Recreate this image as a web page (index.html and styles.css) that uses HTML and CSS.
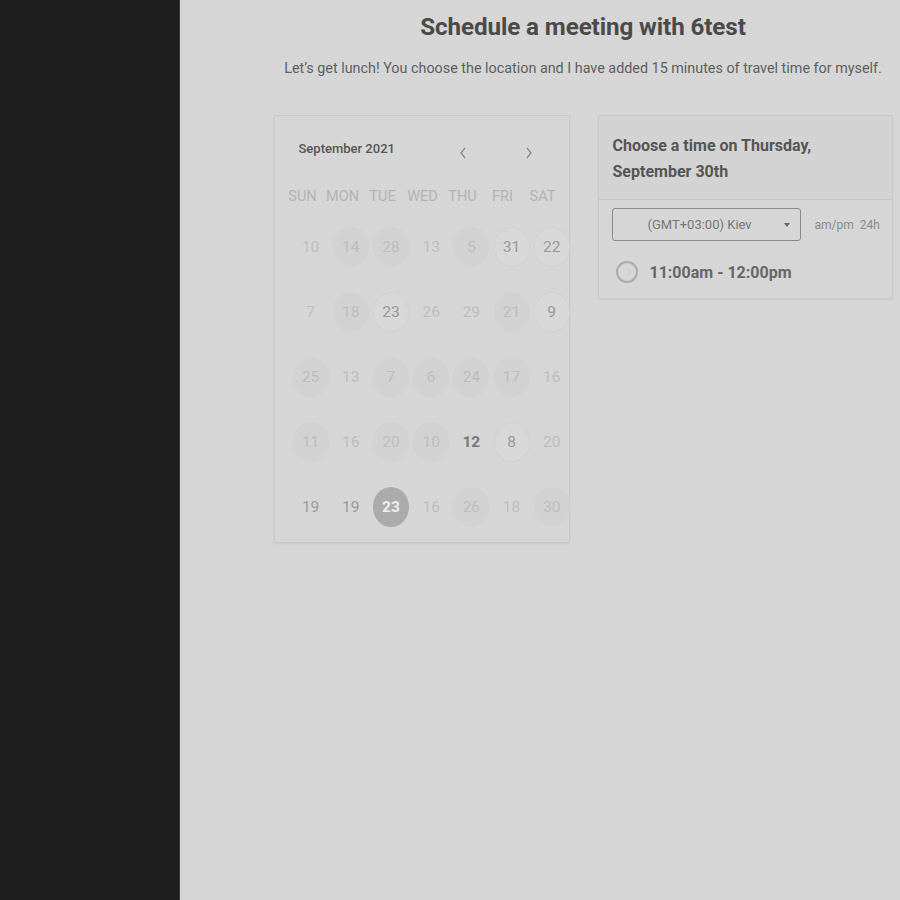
FILE: index.html
```html
<!DOCTYPE html>
<html>
<head>
<meta charset="utf-8">
<link rel="stylesheet" href="styles.css">
</head>
<body>
<div class="app">
  <aside class="sidebar"></aside>
  <main class="main">
    <div class="content">
      <h1 class="title">Schedule a meeting with 6test</h1>
      <p class="subtitle">Let’s get lunch! You choose the location and I have added 15 minutes of travel time for myself.</p>
      <div class="cards">
        <section class="card calendar">
          <div class="cal-head">
            <span class="month">September 2021</span>
            <span class="arrow prev"><svg width="10" height="14" viewBox="0 0 10 14"><path d="M7 2 L3 7 L7 12" fill="none" stroke="#8a8a8a" stroke-width="1.3"/></svg></span>
            <span class="arrow next"><svg width="10" height="14" viewBox="0 0 10 14"><path d="M3 2 L7 7 L3 12" fill="none" stroke="#8a8a8a" stroke-width="1.3"/></svg></span>
          </div>
          <div class="weekdays">
            <span>SUN</span><span>MON</span><span>TUE</span><span>WED</span><span>THU</span><span>FRI</span><span>SAT</span>
          </div>
          <div class="days">
            <span class="day">10</span>
            <span class="day c">14</span>
            <span class="day c">28</span>
            <span class="day">13</span>
            <span class="day c">5</span>
            <span class="day d">31</span>
            <span class="day d">22</span>

            <span class="day">7</span>
            <span class="day c">18</span>
            <span class="day d">23</span>
            <span class="day">26</span>
            <span class="day">29</span>
            <span class="day c">21</span>
            <span class="day d">9</span>

            <span class="day c">25</span>
            <span class="day">13</span>
            <span class="day c">7</span>
            <span class="day c">6</span>
            <span class="day c">24</span>
            <span class="day c">17</span>
            <span class="day">16</span>

            <span class="day c">11</span>
            <span class="day">16</span>
            <span class="day c">20</span>
            <span class="day c">10</span>
            <span class="day strong">12</span>
            <span class="day d">8</span>
            <span class="day">20</span>

            <span class="day mid">19</span>
            <span class="day mid">19</span>
            <span class="day sel">23</span>
            <span class="day">16</span>
            <span class="day c">26</span>
            <span class="day">18</span>
            <span class="day c">30</span>
          </div>
        </section>
        <section class="card times">
          <div class="times-head">Choose a time on Thursday, September 30th</div>
          <div class="times-body">
            <div class="tz-row">
              <div class="select">
                <span class="select-text">(GMT+03:00) Kiev</span>
                <span class="caret"></span>
              </div>
              <span class="fmt">am/pm</span>
              <span class="fmt">24h</span>
            </div>
            <div class="slot">
              <span class="radio"></span>
              <span class="slot-text">11:00am - 12:00pm</span>
            </div>
          </div>
        </section>
      </div>
    </div>
  </main>
</div>
</body>
</html>
```
FILE: styles.css
```css
* { box-sizing: border-box; }
html, body { margin: 0; padding: 0; }
body {
  font-family: Roboto, "Liberation Sans", sans-serif;
  background: #d6d6d6;
}
.app {
  display: flex;
  width: 900px;
  height: 900px;
  overflow: hidden;
}
.sidebar {
  width: 180px;
  flex: none;
  background: #1e1e1e;
  border-right: 1px solid #3a3a3a;
}
.main {
  flex: 1;
  background: #d6d6d6;
  padding-left: 86px;
  overflow: hidden;
}
.content {
  width: 634px;
  display: flex;
  flex-direction: column;
  align-items: center;
  padding-top: 11px;
}
.title {
  margin: 0;
  font-size: 24.2px;
  line-height: 32px;
  font-weight: 700;
  color: #4a4a4a;
  letter-spacing: -0.1px;
}
.subtitle {
  margin: 16px 0 0;
  font-size: 14.35px;
  line-height: 20px;
  color: #5e5e5e;
  white-space: nowrap;
}
.cards {
  display: flex;
  gap: 28px;
  margin-top: 36px;
  align-items: flex-start;
  width: 619px;
}
.card {
  border: 1px solid #c9c9c9;
  border-radius: 2px;
  background: #d6d6d6;
  box-shadow: 0 1px 2px rgba(0,0,0,0.06);
}
.calendar {
  width: 296px;
  height: 428px;
  padding: 0 0 0 8px;
}
.cal-head {
  display: flex;
  align-items: center;
  height: 60px;
  padding: 4px 0 0 16px;
}
.month {
  font-size: 13px;
  font-weight: 500;
  color: #555;
  width: 150px;
}
.arrow {
  display: flex;
  align-items: center;
  justify-content: center;
  width: 14px;
  height: 20px;
  margin-top: 9px;
}
.prev { margin-left: 7px; }
.next { margin-left: 52px; }
.weekdays {
  display: grid;
  grid-template-columns: repeat(7, 40px);
  height: 40px;
  padding-top: 12px;
  font-size: 14.5px;
  color: #b3b3b3;
  text-align: center;
}
.days {
  display: grid;
  grid-template-columns: repeat(7, 40.2px);
  grid-auto-rows: 65.2px;
  padding-left: 8px;
  margin-top: -2px;
}
.day {
  width: 36px;
  height: 40px;
  border-radius: 50%;
  display: flex;
  align-items: center;
  justify-content: center;
  justify-self: center;
  align-self: center;
  font-size: 15.5px;
  color: #bdbdbd;
}
.day.c { background: #d2d2d2; }
.day.d {
  color: #989898;
  background: #d8d8d8;
  border: 1px dotted #cbcbcb;
}
.day.strong { color: #777; font-weight: 700; }
.day.mid { color: #9a9a9a; }
.day.sel {
  background: #ababab;
  color: #eeeeee;
  font-weight: 700;
}
.times {
  width: 295px;
  height: 184px;
}
.times-head {
  height: 84px;
  padding: 17px 60px 0 14px;
  font-size: 16px;
  line-height: 26px;
  font-weight: 700;
  color: #555;
  background: #d3d3d3;
  border-bottom: 1px solid #c6c6c6;
}
.times-body {
  padding: 8px 14px 0 13px;
}
.tz-row {
  display: flex;
  align-items: center;
}
.select {
  flex: none;
  width: 189px;
  height: 33px;
  border: 1px solid #8a8a8a;
  border-radius: 3px;
  display: flex;
  align-items: center;
  padding: 0 10px 0 35px;
}
.select-text {
  flex: 1;
  font-size: 13px;
  color: #777;
}
.caret {
  width: 0;
  height: 0;
  border-left: 3px solid transparent;
  border-right: 3px solid transparent;
  border-top: 4px solid #666;
}
.fmt {
  font-size: 12px;
  color: #8a8a8a;
  margin-left: 14px;
}
.fmt + .fmt { margin-left: 6px; }
.slot {
  display: flex;
  align-items: center;
  margin-top: 20px;
}
.radio {
  width: 22px;
  height: 22px;
  border: 2px solid #ababab;
  border-radius: 50%;
  margin-left: 4px;
}
.slot-text {
  margin-left: 12px;
  font-size: 16px;
  font-weight: 700;
  color: #666;
}
```
